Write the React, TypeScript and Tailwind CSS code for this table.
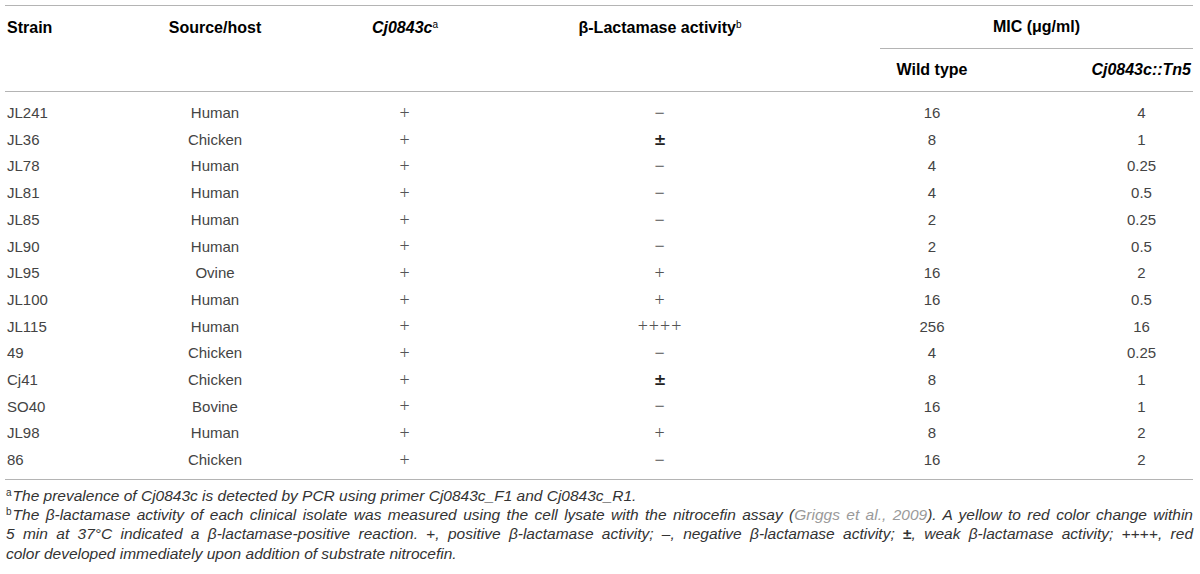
import React from "react";

const rows: [string, string, string, string, string, string][] = [
  ["JL241", "Human", "+", "−", "16", "4"],
  ["JL36", "Chicken", "+", "±", "8", "1"],
  ["JL78", "Human", "+", "−", "4", "0.25"],
  ["JL81", "Human", "+", "−", "4", "0.5"],
  ["JL85", "Human", "+", "−", "2", "0.25"],
  ["JL90", "Human", "+", "−", "2", "0.5"],
  ["JL95", "Ovine", "+", "+", "16", "2"],
  ["JL100", "Human", "+", "+", "16", "0.5"],
  ["JL115", "Human", "+", "++++", "256", "16"],
  ["49", "Chicken", "+", "−", "4", "0.25"],
  ["Cj41", "Chicken", "+", "±", "8", "1"],
  ["SO40", "Bovine", "+", "−", "16", "1"],
  ["JL98", "Human", "+", "+", "8", "2"],
  ["86", "Chicken", "+", "−", "16", "2"],
];

function Sym({ v }: { v: string }) {
  if (v === "±")
    return <span className="font-['DejaVu_Sans',sans-serif] text-[15px] font-bold text-[#222]">±</span>;
  return (
    <span className="font-['Liberation_Serif',serif] text-[18px] tracking-[1px] text-[#555]">{v}</span>
  );
}

export default function App() {
  return (
    <div className="w-[1200px] h-[574px] bg-white pt-[5px] font-['Liberation_Sans',Arial,sans-serif] text-[#444]">
      <div className="ml-[5px] w-[1188px]">
        <div className="h-px bg-[#b4b4b4]" />
        {/* header */}
        <div className="flex h-[85px] text-[16px] font-bold text-black">
          <div className="w-[115px] shrink-0 pl-[2px] pt-[10px]">Strain</div>
          <div className="w-[190px] shrink-0 text-center pt-[10px]">Source/host</div>
          <div className="w-[190px] shrink-0 text-center pt-[10px]">
            <i>Cj0843c</i>
            <sup className="text-[10px] font-normal">a</sup>
          </div>
          <div className="w-[320px] shrink-0 text-center pt-[10px]">
            β-Lactamase activity<sup className="text-[10px] font-normal">b</sup>
          </div>
          <div className="w-[60px] shrink-0" />
          <div className="flex w-[313px] shrink-0 flex-col">
            <div className="flex h-[43px] items-center justify-center border-b border-[#b4b4b4] pb-[1px]">
              MIC (μg/ml)
            </div>
            <div className="flex flex-1 items-center">
              <div className="w-[104px] text-center">Wild type</div>
              <div className="w-[209px] text-right pr-[2px]">
                <i>Cj0843c::Tn5</i>
              </div>
            </div>
          </div>
        </div>
        <div className="h-px bg-[#b4b4b4]" />
        {/* body */}
        <div className="pt-[8px] pb-[5px] text-[15px]">
          {rows.map((r) => (
            <div key={r[0]} className="flex h-[26.7px] items-center">
              <div className="w-[115px] shrink-0 pl-[2px]">{r[0]}</div>
              <div className="w-[190px] shrink-0 text-center">{r[1]}</div>
              <div className="w-[190px] shrink-0 text-center">
                <Sym v={r[2]} />
              </div>
              <div className="w-[320px] shrink-0 text-center">
                <Sym v={r[3]} />
              </div>
              <div className="w-[60px] shrink-0" />
              <div className="w-[104px] shrink-0 text-center">{r[4]}</div>
              <div className="w-[209px] shrink-0 pl-[106px] text-center">{r[5]}</div>
            </div>
          ))}
        </div>
        <div className="h-px bg-[#b4b4b4]" />
        {/* footnotes */}
        <div className="pt-[6px] pl-[1px] text-[15.5px] italic leading-[19.3px] text-[#333]">
          <div>
            <sup className="not-italic text-[10px] mr-[1px]">a</sup>The prevalence of Cj0843c is detected by PCR using primer Cj0843c_F1 and Cj0843c_R1.
          </div>
          <div className="text-justify [text-align-last:justify]">
            <sup className="not-italic text-[10px] mr-[1px]">b</sup>The β-lactamase activity of each clinical isolate was measured using the cell lysate with the nitrocefin assay (
            <span className="text-[#9a9a9a]">Griggs et al., 2009</span>). A yellow to red color change within
          </div>
          <div className="text-justify [text-align-last:justify]">
            5 min at 37°C indicated a β-lactamase-positive reaction. <span className="not-italic">+</span>, positive β-lactamase activity; –, negative β-lactamase activity;{" "}
            <span className="not-italic font-bold">±</span>, weak β-lactamase activity; <span className="not-italic">++++</span>, red
          </div>
          <div>color developed immediately upon addition of substrate nitrocefin.</div>
        </div>
      </div>
    </div>
  );
}
